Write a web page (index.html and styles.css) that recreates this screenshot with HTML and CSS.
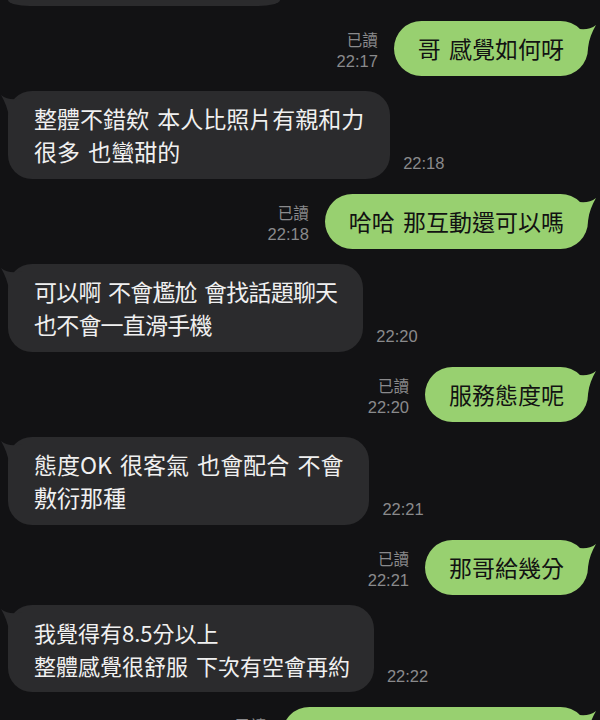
FILE: index.html
```html
<!DOCTYPE html>
<html lang="zh-Hant">

<head>
    <meta charset="UTF-8">
    <title>聊天</title>
    <link rel="stylesheet" href="styles.css">
</head>

<body>
    <div class="chat">

        <div class="row in">
            <div class="bubble cut"></div>
        </div>

        <div class="row out">
            <div class="meta">
                <div class="read">已讀</div>
                <div class="time">22:17</div>
            </div>
            <div class="bubble">哥 感覺如何呀
                <svg class="tail" width="24" height="26" viewBox="0 0 24 26"><path d="M0 4 C8 6 16 6 22 1 C18 8 15 15 14 24 L0 24 Z" /></svg>
            </div>
        </div>

        <div class="row in">
            <div class="bubble">整體不錯欸 本人比照片有親和力<br>很多 也蠻甜的
                <svg class="tail" width="24" height="26" viewBox="0 0 24 26"><path d="M24 4 C16 6 8 6 2 1 C6 8 9 15 10 24 L24 24 Z" /></svg>
            </div>
            <div class="time">22:18</div>
        </div>

        <div class="row out">
            <div class="meta">
                <div class="read">已讀</div>
                <div class="time">22:18</div>
            </div>
            <div class="bubble">哈哈 那互動還可以嗎
                <svg class="tail" width="24" height="26" viewBox="0 0 24 26"><path d="M0 4 C8 6 16 6 22 1 C18 8 15 15 14 24 L0 24 Z" /></svg>
            </div>
        </div>

        <div class="row in">
            <div class="bubble narrow">可以啊 不會尷尬 會找話題聊天<br>也不會一直滑手機
                <svg class="tail" width="24" height="26" viewBox="0 0 24 26"><path d="M24 4 C16 6 8 6 2 1 C6 8 9 15 10 24 L24 24 Z" /></svg>
            </div>
            <div class="time">22:20</div>
        </div>

        <div class="row out">
            <div class="meta">
                <div class="read">已讀</div>
                <div class="time">22:20</div>
            </div>
            <div class="bubble">服務態度呢
                <svg class="tail" width="24" height="26" viewBox="0 0 24 26"><path d="M0 4 C8 6 16 6 22 1 C18 8 15 15 14 24 L0 24 Z" /></svg>
            </div>
        </div>

        <div class="row in">
            <div class="bubble">態度OK 很客氣 也會配合 不會<br>敷衍那種
                <svg class="tail" width="24" height="26" viewBox="0 0 24 26"><path d="M24 4 C16 6 8 6 2 1 C6 8 9 15 10 24 L24 24 Z" /></svg>
            </div>
            <div class="time">22:21</div>
        </div>

        <div class="row out">
            <div class="meta">
                <div class="read">已讀</div>
                <div class="time">22:21</div>
            </div>
            <div class="bubble">那哥給幾分
                <svg class="tail" width="24" height="26" viewBox="0 0 24 26"><path d="M0 4 C8 6 16 6 22 1 C18 8 15 15 14 24 L0 24 Z" /></svg>
            </div>
        </div>

        <div class="row in close">
            <div class="bubble small">我覺得有8.5分以上<br>整體感覺很舒服 下次有空會再約
                <svg class="tail" width="24" height="26" viewBox="0 0 24 26"><path d="M24 4 C16 6 8 6 2 1 C6 8 9 15 10 24 L24 24 Z" /></svg>
            </div>
            <div class="time">22:22</div>
        </div>

        <div class="row out">
            <div class="meta">
                <div class="read">已讀</div>
                <div class="time">22:23</div>
            </div>
            <div class="bubble wide">&nbsp;
                <svg class="tail" width="24" height="26" viewBox="0 0 24 26"><path d="M0 4 C8 6 16 6 22 1 C18 8 15 15 14 24 L0 24 Z" /></svg>
            </div>
        </div>

    </div>
</body>

</html>
```

FILE: styles.css
```css
html,
body {
    margin: 0;
    height: 720px;
    overflow: hidden;
    background-color: #121214;
}

.chat {
    display: flex;
    flex-flow: column;
    gap: 15px;
    padding: 0 12px 0 8px;
    font-family: "Noto Sans CJK TC", "Noto Sans", sans-serif;
}

.row {
    display: flex;
    align-items: flex-end;
}

.row.out {
    justify-content: flex-end;
}

.row.close {
    margin-top: -5px;
}

.bubble {
    position: relative;
    font-size: 23px;
    line-height: 33px;
    word-spacing: 3px;
    padding: 11px 26px;
    border-radius: 24px;
    white-space: nowrap;
}

.bubble.narrow {
    letter-spacing: -0.8px;
}

.bubble.small {
    font-size: 22px;
    line-height: 33px;
    padding: 11px 24px 10px 26px;
}

.in .bubble {
    background-color: #2b2b2d;
    color: #f0f0f0;
}

.out .bubble {
    background-color: #98d070;
    color: #121212;
    border-radius: 28px;
    padding: 11px 24px;
}

.bubble.cut {
    height: 6px;
    width: 272px;
    padding: 0;
    border-radius: 0 0 22px 22px / 0 0 6px 6px;
}

.bubble.wide {
    width: 258px;
}

.tail {
    position: absolute;
    top: 3px;
}

.in .tail {
    left: -9px;
    fill: #2b2b2d;
}

.out .tail {
    right: -10px;
    fill: #98d070;
}

.meta {
    text-align: right;
    margin-right: 16px;
    padding-bottom: 3px;
}

.read {
    font-size: 15.5px;
    line-height: 20px;
    color: #8a8a8c;
}

.time {
    font-family: "Liberation Sans", Arial, sans-serif;
    font-size: 16.5px;
    line-height: 24px;
    color: #8a8a8c;
}

.in .time {
    margin-left: 13px;
    padding-bottom: 4px;
}
```
